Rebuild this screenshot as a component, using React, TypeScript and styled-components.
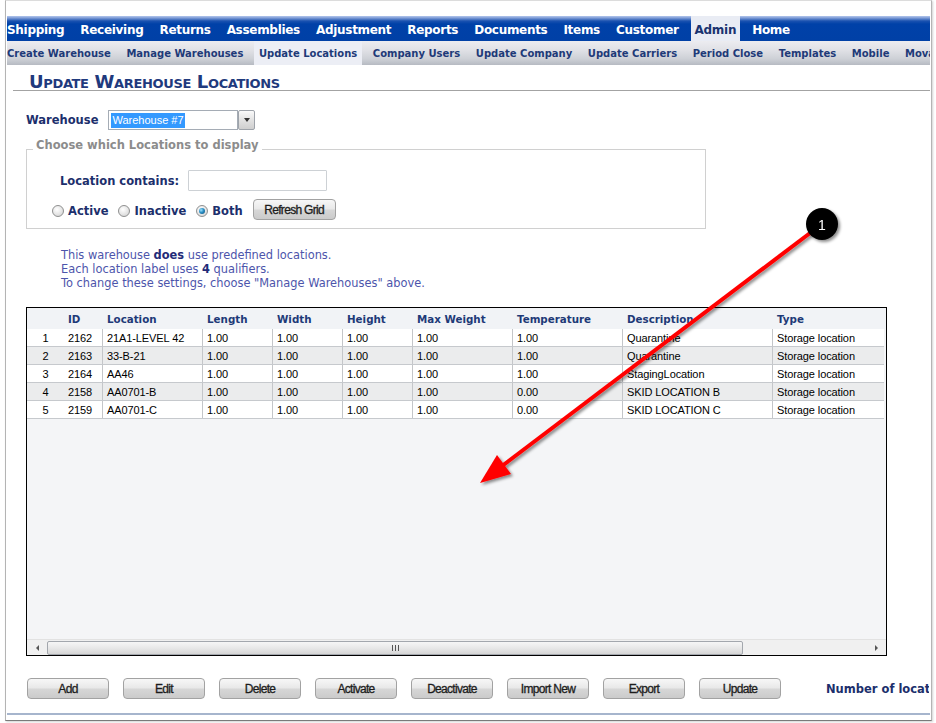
import React from "react";
import styled, { createGlobalStyle } from "styled-components";

const Global = createGlobalStyle`
  html, body { margin: 0; padding: 0; background: #fff; }
  body { font-family: "DejaVu Sans", Verdana, sans-serif; }
  #root { width: 936px; height: 723px; position: relative; overflow: hidden; }
`;

const Frame = styled.div`
  box-sizing: border-box;
  margin-left: 5px;
  width: 927px;
  height: 721px;
  border: 1px solid #b4b4b4;
  border-top-color: #dcdcdc;
  border-bottom-color: #7a7a7a;
  padding: 15px 1px 0 1px;
  display: flex;
  flex-direction: column;
  overflow: hidden;
  box-shadow: 1px 1px 2px rgba(0, 0, 0, 0.18);
`;

const TopNav = styled.nav`
  height: 25px;
  flex: none;
  display: flex;
  align-items: stretch;
  overflow: hidden;
  background: linear-gradient(#b3c6ec 0, #7d9bd6 2px, #1a52b0 5px, #0041a8 8px, #0040a6 100%);
`;

const TopItem = styled.a<{ $active?: boolean }>`
  display: flex;
  align-items: center;
  padding: 2px 4px 0;
  margin-right: 8px;
  font: bold 12px "DejaVu Sans", Verdana, sans-serif;
  letter-spacing: -0.3px;
  white-space: nowrap;
  color: ${(p) => (p.$active ? "#1a3470" : "#ffffff")};
  background: ${(p) => (p.$active ? "#e9ecf4" : "transparent")};
  &:first-child { padding-left: 0; }
`;

const SubNav = styled.nav`
  height: 24px;
  flex: none;
  display: flex;
  overflow: hidden;
  background: linear-gradient(#ececf0 0, #dfe0e5 40%, #cdd0d6 75%, #b6bac2 100%);
`;

const SubItem = styled.a<{ $active?: boolean }>`
  display: flex;
  align-items: center;
  padding: 0 5px;
  margin-right: 5.6px;
  font: bold 10px "DejaVu Sans", Verdana, sans-serif;
  white-space: nowrap;
  color: #1e3a78;
  background: ${(p) => (p.$active ? "#eceef5" : "transparent")};
  &:first-child { padding-left: 0; }
`;

const TitleBar = styled.div`
  flex: none;
  box-sizing: border-box;
  height: 26px;
  margin-left: 6px;
  padding: 8px 0 0 16px;
  border-bottom: 1px solid #a3a3a3;
`;

const Title = styled.h1`
  margin: 0;
  font: bold 18px "DejaVu Sans", Verdana, sans-serif;
  font-variant: small-caps;
  line-height: 17px;
  color: #1f3a7d;
  letter-spacing: -0.35px;
`;

const Body = styled.div`
  flex: none;
  padding-left: 19px;
  display: flex;
  flex-direction: column;
  overflow: hidden;
`;

const Label = styled.span`
  font: bold 11.5px "DejaVu Sans", Verdana, sans-serif;
  color: #1c2f6c;
  white-space: nowrap;
`;

const WarehouseRow = styled.div`
  margin-top: 19px;
  height: 20px;
  display: flex;
  align-items: center;
  gap: 10px;
`;

const SelectWrap = styled.div`
  display: flex;
  height: 20px;
`;

const SelectField = styled.div`
  box-sizing: border-box;
  width: 130px;
  height: 20px;
  border: 1px solid #a5acb5;
  padding: 0 2px;
  display: flex;
  align-items: center;
  background: #fff;
`;

const Highlight = styled.span`
  background: #3399ff;
  color: #fff;
  font: 11px "Liberation Sans", Arial, sans-serif;
  line-height: 15px;
  padding: 0 1px;
`;

const DropBtn = styled.div`
  box-sizing: border-box;
  width: 17px;
  height: 20px;
  border: 1px solid #9ea3aa;
  border-radius: 2px;
  background: linear-gradient(#fafafa, #e2e2e2 50%, #cfcfcf);
  display: flex;
  align-items: center;
  justify-content: center;
  &::after {
    content: "";
    border-left: 3px solid transparent;
    border-right: 3px solid transparent;
    border-top: 4px solid #333;
  }
`;

const Fieldset = styled.fieldset`
  margin: 8px 0 0 0;
  width: 680px;
  box-sizing: border-box;
  border: 1px solid #d0d0d0;
  padding: 0 0 8px 6px;
  min-inline-size: auto;
`;

const Legend = styled.legend`
  padding: 0 3px 8px;
  font: bold 11.5px "DejaVu Sans", Verdana, sans-serif;
  line-height: 14px;
  color: #8c8c8c;
`;

const ContainsRow = styled.div`
  margin: 10px 0 0 27px;
  display: flex;
  align-items: center;
  gap: 9px;
`;

const TextInput = styled.div`
  box-sizing: border-box;
  width: 139px;
  height: 21px;
  border: 1px solid #cdd1d5;
  border-radius: 1px;
  background: #fff;
`;

const RadioRow = styled.div`
  margin: 8px 0 0 19px;
  height: 21px;
  display: flex;
  align-items: center;
`;

const RadioOpt = styled.label`
  display: flex;
  align-items: center;
  gap: 4px;
  margin-right: 10px;
  padding-top: 2px;
`;

const Radio = styled.span<{ $checked?: boolean }>`
  box-sizing: border-box;
  width: 12px;
  height: 12px;
  border-radius: 50%;
  border: 1px solid #8f9090;
  background: radial-gradient(circle at 40% 35%, #ffffff 0, #ececec 40%, #cfcfcf 100%);
  display: flex;
  align-items: center;
  justify-content: center;
  &::after {
    content: "";
    display: ${(p) => (p.$checked ? "block" : "none")};
    width: 6px;
    height: 6px;
    border-radius: 50%;
    background: radial-gradient(circle at 35% 35%, #9fe3ff 0, #2a8ec4 45%, #0b4a74 100%);
  }
`;

const Btn = styled.button<{ $w?: number }>`
  box-sizing: border-box;
  width: ${(p) => p.$w ?? 82}px;
  height: 21px;
  padding: 0;
  border: 1px solid #a2a2a2;
  border-radius: 4px;
  background: linear-gradient(#f7f7f7 0, #e9e9e9 45%, #d6d6d6 55%, #cbcbcb 100%);
  font: 12px "Liberation Sans", Arial, sans-serif;
  letter-spacing: -0.7px;
  color: #1c1c1c;
  -webkit-text-stroke: 0.3px #1c1c1c;
  display: flex;
  align-items: center;
  justify-content: center;
  flex: none;
`;

const Info = styled.div`
  margin: 19px 0 0 35px;
  font: 11.4px "DejaVu Sans", Verdana, sans-serif;
  line-height: 14px;
  color: #4d55ab;
  b { color: #232a78; }
`;

const Grid = styled.div`
  margin-top: 17px;
  box-sizing: border-box;
  width: 861px;
  height: 349px;
  flex: none;
  border: 1px solid #000;
  background: #f4f5f7;
  display: flex;
  flex-direction: column;
`;

const HeadRow = styled.div`
  height: 21px;
  display: flex;
  background: #f1f3f6;
  flex: none;
`;

const DataRow = styled.div<{ $alt?: boolean }>`
  box-sizing: border-box;
  height: 18px;
  width: 857px;
  display: flex;
  flex: none;
  border-bottom: 1px solid #c6c9cd;
  background: ${(p) => (p.$alt ? "#ebeced" : "#ffffff")};
`;

const Cell = styled.div<{ $w: number; $sep?: boolean; $center?: boolean }>`
  box-sizing: border-box;
  width: ${(p) => p.$w}px;
  flex: none;
  padding: 1px 0 0 ${(p) => (p.$center ? 0 : 4)}px;
  border-left: 1px solid ${(p) => (p.$sep ? "#c4c6c9" : "transparent")};
  font: 11px "Liberation Sans", Arial, sans-serif;
  letter-spacing: -0.1px;
  color: #000;
  display: flex;
  align-items: center;
  justify-content: ${(p) => (p.$center ? "center" : "flex-start")};
  white-space: nowrap;
  overflow: hidden;
`;

const HeadCell = styled(Cell)`
  font: bold 10.3px "DejaVu Sans", Verdana, sans-serif;
  letter-spacing: 0;
  color: #1e3a78;
  border-left-color: transparent;
`;

const Empty = styled.div`
  flex: 1;
`;

const Scrollbar = styled.div`
  height: 16px;
  flex: none;
  display: flex;
  align-items: center;
  background: #f0f0f0;
  border-top: 1px solid #e2e2e2;
  box-sizing: border-box;
`;

const ArrowBtn = styled.div<{ $dir: "left" | "right" }>`
  width: 20px;
  height: 15px;
  flex: none;
  display: flex;
  align-items: center;
  justify-content: center;
  &::after {
    content: "";
    border-top: 3px solid transparent;
    border-bottom: 3px solid transparent;
    ${(p) => (p.$dir === "left" ? "border-right: 3px solid #555;" : "border-left: 3px solid #555;")}
  }
`;

const Track = styled.div`
  flex: 1;
  height: 15px;
  display: flex;
  align-items: center;
`;

const Thumb = styled.div`
  box-sizing: border-box;
  width: 696px;
  height: 14px;
  border: 1px solid #a3a7ad;
  border-radius: 2px;
  background: linear-gradient(#f6f6f6, #e8e8e8 50%, #d6d6d6);
  display: flex;
  align-items: center;
  justify-content: center;
`;

const Grip = styled.span`
  width: 7px;
  height: 6px;
  background: repeating-linear-gradient(90deg, #555 0 1px, transparent 1px 3px);
`;

const ButtonRow = styled.div`
  margin: 22px 0 0 1px;
  height: 21px;
  display: flex;
  align-items: center;
  gap: 14px;
  width: 902px;
  overflow: hidden;
`;

const CountLabel = styled(Label)`
  margin-left: 31px;
`;

const FooterLine = styled.div`
  margin-top: 14px;
  height: 2px;
  flex: none;
  background: #a6b5cd;
`;

const Overlay = styled.svg`
  position: absolute;
  left: 0;
  top: 0;
  width: 936px;
  height: 723px;
  pointer-events: none;
`;

const topItems = ["Shipping", "Receiving", "Returns", "Assemblies", "Adjustment", "Reports", "Documents", "Items", "Customer", "Admin", "Home"];
const subItems = ["Create Warehouse", "Manage Warehouses", "Update Locations", "Company Users", "Update Company", "Update Carriers", "Period Close", "Templates", "Mobile", "Movable Locations"];

const cols = [
  { w: 36, title: "", center: true, sep: false },
  { w: 39, title: "ID", sep: false },
  { w: 100, title: "Location", sep: true },
  { w: 70, title: "Length", sep: true },
  { w: 70, title: "Width", sep: true },
  { w: 70, title: "Height", sep: true },
  { w: 100, title: "Max Weight", sep: true },
  { w: 110, title: "Temperature", sep: true },
  { w: 150, title: "Description", sep: true },
  { w: 112, title: "Type", sep: true },
];

const rows = [
  ["1", "2162", "21A1-LEVEL 42", "1.00", "1.00", "1.00", "1.00", "1.00", "Quarantine", "Storage location"],
  ["2", "2163", "33-B-21", "1.00", "1.00", "1.00", "1.00", "1.00", "Quarantine", "Storage location"],
  ["3", "2164", "AA46", "1.00", "1.00", "1.00", "1.00", "1.00", "StagingLocation", "Storage location"],
  ["4", "2158", "AA0701-B", "1.00", "1.00", "1.00", "1.00", "0.00", "SKID LOCATION B", "Storage location"],
  ["5", "2159", "AA0701-C", "1.00", "1.00", "1.00", "1.00", "0.00", "SKID LOCATION C", "Storage location"],
];

const actions = ["Add", "Edit", "Delete", "Activate", "Deactivate", "Import New", "Export", "Update"];

export default function App() {
  return (
    <>
      <Global />
      <Frame>
        <TopNav>
          {topItems.map((t) => (
            <TopItem key={t} $active={t === "Admin"}>{t}</TopItem>
          ))}
        </TopNav>
        <SubNav>
          {subItems.map((t) => (
            <SubItem key={t} $active={t === "Update Locations"}>{t}</SubItem>
          ))}
        </SubNav>
        <TitleBar>
          <Title>Update Warehouse Locations</Title>
        </TitleBar>
        <Body>
          <WarehouseRow>
            <Label>Warehouse</Label>
            <SelectWrap>
              <SelectField>
                <Highlight>Warehouse #7</Highlight>
              </SelectField>
              <DropBtn />
            </SelectWrap>
          </WarehouseRow>
          <Fieldset>
            <Legend>Choose which Locations to display</Legend>
            <ContainsRow>
              <Label>Location contains:</Label>
              <TextInput />
            </ContainsRow>
            <RadioRow>
              <RadioOpt><Radio /><Label>Active</Label></RadioOpt>
              <RadioOpt><Radio /><Label>Inactive</Label></RadioOpt>
              <RadioOpt><Radio $checked /><Label>Both</Label></RadioOpt>
              <Btn $w={83}>Refresh Grid</Btn>
            </RadioRow>
          </Fieldset>
          <Info>
            <div>This warehouse <b>does</b> use predefined locations.</div>
            <div>Each location label uses <b>4</b> qualifiers.</div>
            <div>To change these settings, choose "Manage Warehouses" above.</div>
          </Info>
          <Grid>
            <HeadRow>
              {cols.map((c, i) => (
                <HeadCell key={i} $w={c.w} $center={c.center}>{c.title}</HeadCell>
              ))}
            </HeadRow>
            {rows.map((r, ri) => (
              <DataRow key={ri} $alt={ri % 2 === 1}>
                {r.map((v, ci) => (
                  <Cell key={ci} $w={cols[ci].w} $sep={cols[ci].sep} $center={cols[ci].center}>{v}</Cell>
                ))}
              </DataRow>
            ))}
            <Empty />
            <Scrollbar>
              <ArrowBtn $dir="left" />
              <Track><Thumb><Grip /></Thumb></Track>
              <ArrowBtn $dir="right" />
            </Scrollbar>
          </Grid>
          <ButtonRow>
            {actions.map((a) => (
              <Btn key={a}>{a}</Btn>
            ))}
            <CountLabel>Number of locations: 5</CountLabel>
          </ButtonRow>
        </Body>
        <FooterLine />
      </Frame>
      <Overlay viewBox="0 0 936 723">
        <defs>
          <filter id="shadow" x="-20%" y="-20%" width="140%" height="140%">
            <feDropShadow dx="2" dy="2" stdDeviation="1.5" floodColor="#000" floodOpacity="0.45" />
          </filter>
        </defs>
        <g filter="url(#shadow)">
          <line x1="822" y1="224" x2="502" y2="466" stroke="#ff0000" strokeWidth="4" />
          <polygon points="480,483 511,474 497,455" fill="#ff0000" />
        </g>
        <g filter="url(#shadow)">
          <circle cx="822" cy="224" r="16" fill="#000" />
          <text x="822" y="229.5" textAnchor="middle" fill="#fff" fontFamily="Liberation Sans, Arial, sans-serif" fontSize="14">1</text>
        </g>
      </Overlay>
    </>
  );
}
